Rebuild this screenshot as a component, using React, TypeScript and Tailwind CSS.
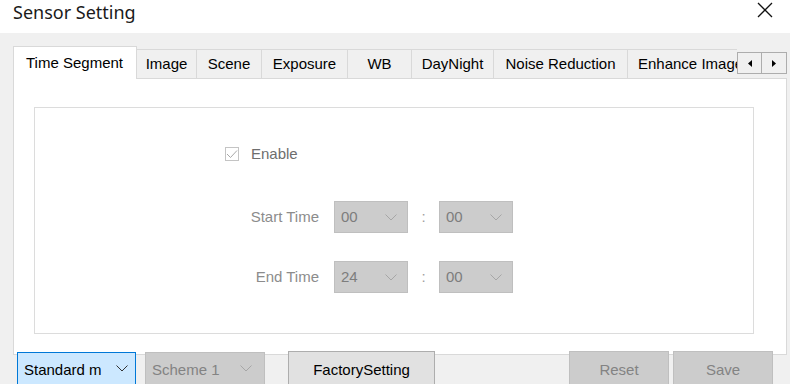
import React from "react";

const tabs = [
  { label: "Image", w: "w-[60px]" },
  { label: "Scene", w: "w-[65px]" },
  { label: "Exposure", w: "w-[86px]" },
  { label: "WB", w: "w-[64px]" },
  { label: "DayNight", w: "w-[82px]" },
  { label: "Noise Reduction", w: "w-[134px]" },
];

function Chevron({ color = "#a6a6a6" }: { color?: string }) {
  return (
    <svg width="12" height="7" viewBox="0 0 12 7" fill="none">
      <path d="M0.5 0.5 L6 6 L11.5 0.5" stroke={color} strokeWidth="1" />
    </svg>
  );
}

function TimeSelect({ value }: { value: string }) {
  return (
    <div className="w-[74px] h-[32px] bg-[#cccccc] border border-[#bfbfbf] flex items-center justify-between pl-[6px] pr-[10px] text-[15px] text-[#7d7d7d]">
      <span>{value}</span>
      <Chevron />
    </div>
  );
}

function TimeRow({ label, hour, minute }: { label: string; hour: string; minute: string }) {
  return (
    <div className="flex items-center">
      <div className="w-[284px] text-right text-[15px] text-[#8c8c8c]">{label}</div>
      <div className="ml-[15px]">
        <TimeSelect value={hour} />
      </div>
      <div className="w-[31px] text-center text-[15px] text-[#a0a0a0]">:</div>
      <TimeSelect value={minute} />
    </div>
  );
}

export default function App() {
  return (
    <div
      className="w-[790px] h-[384px] overflow-hidden bg-[#f0f0f0] flex flex-col"
      style={{ fontFamily: '"Liberation Sans", Arial, sans-serif' }}
    >
      {/* Title bar */}
      <div className="h-[33px] bg-white flex items-start justify-between shrink-0">
        <div
          className="pl-[13px] pt-[0px] text-[18px] text-[#1a1a1a] leading-[24px]"
          style={{ fontFamily: '"Noto Sans", sans-serif' }}
        >
          Sensor Setting
        </div>
        <svg width="16" height="16" viewBox="0 0 16 16" className="mt-[2px] mr-[17px]">
          <path d="M1 1 L15 15 M15 1 L1 15" stroke="#111" strokeWidth="1.3" />
        </svg>
      </div>

      {/* Tabs */}
      <div className="pl-[13px] pt-[13px] flex flex-col">
        <div className="flex items-end h-[32px] relative">
          <div className="w-[124px] h-[33px] -mb-px bg-white border border-b-0 border-[#d9d9d9] relative z-10 flex items-start pt-[5px] pl-[12px] text-[15px] text-black">
            Time Segment
          </div>
          {tabs.map((t) => (
            <div
              key={t.label}
              className={`${t.w} h-[29px] border-t border-r border-[#d9d9d9] flex items-center justify-center text-[15px] text-black`}
            >
              {t.label}
            </div>
          ))}
          <div className="w-[109px] h-[29px] border-t border-[#d9d9d9] overflow-hidden whitespace-nowrap flex items-center pl-[10px] text-[15px] text-black">
            Enhance Image
          </div>
          <div className="flex self-start mt-[6px]">
            <div className="w-[25px] h-[22px] bg-[#f0f0f0] border border-[#adadad] flex items-center justify-center">
              <svg width="4" height="7" viewBox="0 0 4 7">
                <path d="M4 0 L0 3.5 L4 7 Z" fill="#000" />
              </svg>
            </div>
            <div className="w-[25px] h-[22px] bg-[#f0f0f0] border border-l-0 border-[#adadad] flex items-center justify-center">
              <svg width="4" height="7" viewBox="0 0 4 7">
                <path d="M0 0 L4 3.5 L0 7 Z" fill="#000" />
              </svg>
            </div>
          </div>
        </div>

        {/* Panel */}
        <div className="w-[774px] h-[277px] bg-white border border-[#d9d9d9] pl-[20px] pt-[28px]">
          <div className="w-[720px] h-[227px] border border-[#dcdcdc] flex flex-col pt-[39px]">
            <div className="flex items-center pl-[190px] h-[14px]">
              <div className="w-[14px] h-[14px] border border-[#c4c4c4] bg-white flex items-center justify-center">
                <svg width="12" height="10" viewBox="0 0 12 10" fill="none">
                  <path d="M1 5 L4.5 8.5 L11 1.5" stroke="#a8a8a8" strokeWidth="1" />
                </svg>
              </div>
              <span className="ml-[12px] text-[15px] text-[#6e6e6e]">Enable</span>
            </div>
            <div className="mt-[40px]">
              <TimeRow label="Start Time" hour="00" minute="00" />
            </div>
            <div className="mt-[28px]">
              <TimeRow label="End Time" hour="24" minute="00" />
            </div>
          </div>
        </div>
      </div>

      {/* Bottom row */}
      <div className="flex items-start -mt-[4px] relative z-10">
        <div className="ml-[17px] mt-[1px] w-[119px] h-[36px] bg-[#cce8ff] border border-[#0078d7] flex items-start justify-between pl-[6px] pr-[7px] pt-[6px] text-[15px] text-black">
          <span>Standard m</span>
          <span className="mt-[6px]">
            <Chevron color="#333" />
          </span>
        </div>
        <div className="ml-[9px] mt-[1px] w-[120px] h-[36px] bg-[#cccccc] border border-[#bfbfbf] flex items-start justify-between pl-[6px] pr-[12px] pt-[6px] text-[15px] text-[#838383]">
          <span>Scheme 1</span>
          <span className="mt-[6px]">
            <Chevron />
          </span>
        </div>
        <div className="ml-[23px] w-[147px] h-[36px] bg-[#e1e1e1] border border-[#adadad] flex items-start justify-center pt-[7px] text-[15px] text-black">
          FactorySetting
        </div>
        <div className="ml-[134px] w-[100px] h-[36px] bg-[#cccccc] border border-[#bfbfbf] flex items-start justify-center pt-[7px] text-[15px] text-[#838383]">
          Reset
        </div>
        <div className="ml-[4px] w-[100px] h-[36px] bg-[#cccccc] border border-[#bfbfbf] flex items-start justify-center pt-[7px] text-[15px] text-[#838383]">
          Save
        </div>
      </div>
    </div>
  );
}
